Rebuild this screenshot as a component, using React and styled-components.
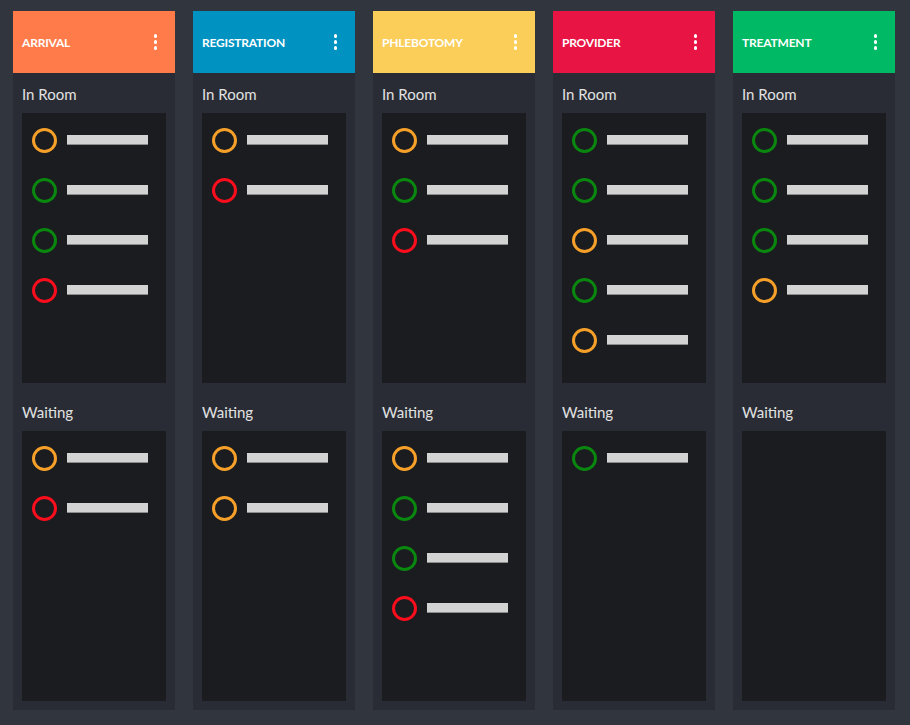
import React from 'react';
import styled, { createGlobalStyle } from 'styled-components';

const GlobalStyle = createGlobalStyle`
  html, body {
    margin: 0;
    padding: 0;
    background-color: #31353d;
    font-family: Lato, "Noto Sans", sans-serif;
  }
`;

const statusColors = {
  orange: '#f6a02a',
  green: '#0a870f',
  red: '#fa0d1c',
};

const Board = styled.div`
  display: flex;
  gap: 18px;
  padding: 11px 15px 15px 13px;
  width: 910px;
  box-sizing: border-box;
`;

const Column = styled.div`
  width: 162px;
  flex-shrink: 0;
  background-color: #292c34;
  padding-bottom: 9px;
`;

const Header = styled.div`
  height: 62px;
  display: flex;
  align-items: center;
  justify-content: space-between;
  padding: 0 18px 0 9px;
  background-color: ${({ color }) => color};
`;

const Title = styled.span`
  color: #ffffff;
  font-size: 12px;
  font-weight: 700;
  letter-spacing: -0.2px;
  text-transform: uppercase;
`;

const MenuDots = styled.div`
  display: flex;
  flex-direction: column;
  gap: 2.5px;
  span {
    width: 3.5px;
    height: 3.5px;
    border-radius: 50%;
    background-color: #ffffff;
  }
`;

const SectionLabel = styled.div`
  color: #e2e2e2;
  font-size: 15px;
  padding: 12px 9px 0;
  height: 40px;
  line-height: 18px;
  box-sizing: border-box;
`;

const Section = styled.div`
  margin-top: ${({ first }) => (first ? '0' : '8px')};
`;

const Box = styled.div`
  margin: 0 9px;
  height: 270px;
  background-color: #1b1c1f;
  padding: 14px 0 0 10px;
  box-sizing: border-box;
  display: flex;
  flex-direction: column;
  gap: 24px;
`;

const Row = styled.div`
  display: flex;
  align-items: center;
  gap: 10px;
  height: 26px;
`;

const Circle = styled.div`
  width: 25px;
  height: 25px;
  border-radius: 50%;
  border: 3px solid ${({ status }) => statusColors[status]};
  box-sizing: border-box;
`;

const Bar = styled.div`
  width: 81px;
  height: 10px;
  background-color: #d3d3d3;
  border-bottom: 1px solid #8c8c8c;
  box-sizing: border-box;
`;

const columns = [
  { title: 'Arrival', color: '#ff7c4a', inRoom: ['orange', 'green', 'green', 'red'], waiting: ['orange', 'red'] },
  { title: 'Registration', color: '#0093c2', inRoom: ['orange', 'red'], waiting: ['orange', 'orange'] },
  { title: 'Phlebotomy', color: '#fbcd59', inRoom: ['orange', 'green', 'red'], waiting: ['orange', 'green', 'green', 'red'] },
  { title: 'Provider', color: '#e81444', inRoom: ['green', 'green', 'orange', 'green', 'orange'], waiting: ['green'] },
  { title: 'Treatment', color: '#00b964', inRoom: ['green', 'green', 'green', 'orange'], waiting: [] },
];

const PatientList = ({ items }) => (
  <Box>
    {items.map((status, i) => (
      <Row key={i}>
        <Circle status={status} />
        <Bar />
      </Row>
    ))}
  </Box>
);

const App = () => {
  return (
    <>
      <GlobalStyle />
      <Board>
        {columns.map((col) => (
          <Column key={col.title}>
            <Header color={col.color}>
              <Title>{col.title}</Title>
              <MenuDots>
                <span />
                <span />
                <span />
              </MenuDots>
            </Header>
            <Section first>
              <SectionLabel>In Room</SectionLabel>
              <PatientList items={col.inRoom} />
            </Section>
            <Section>
              <SectionLabel>Waiting</SectionLabel>
              <PatientList items={col.waiting} />
            </Section>
          </Column>
        ))}
      </Board>
    </>
  );
};

export default App;
